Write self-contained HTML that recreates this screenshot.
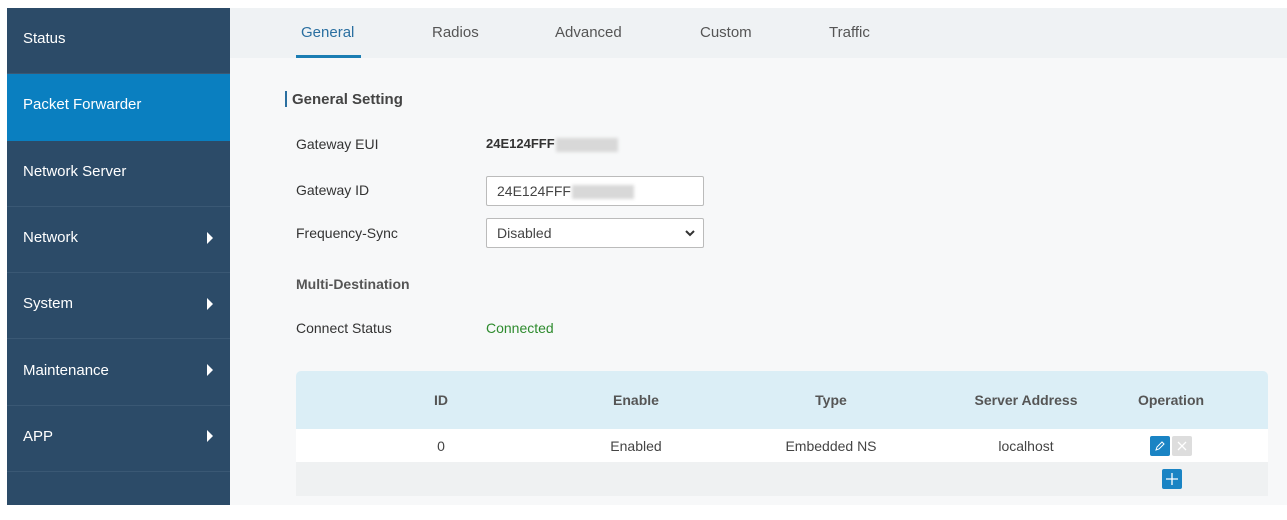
<!DOCTYPE html>
<html><head><style>
*{margin:0;padding:0;box-sizing:border-box}
body{width:1287px;height:520px;background:#fff;font-family:"Liberation Sans",Arial,sans-serif;font-size:14px;color:#333;position:relative;overflow:hidden}
.side{position:absolute;left:7px;top:8px;width:223px;height:497px;background:#2c4b68}
.it{height:66.3px;color:#fff;font-size:15px;padding-left:16px;padding-bottom:4px;display:flex;align-items:center;border-bottom:1px solid #3a5874;position:relative}
.it.act{background:#0a7fc0;border-bottom-color:#0a7fc0}
.arr{position:absolute;right:17px;top:50%;margin-top:-8px;width:0;height:0;border-left:6px solid #fff;border-top:6px solid transparent;border-bottom:6px solid transparent}
.main{position:absolute;left:230px;top:8px;width:1057px;height:497px;background:#f7f8f9}
.tabs{height:50px;background:#eff2f4;position:relative}
.tab{position:absolute;top:16px;font-size:15px;color:#555}
.tab.act{color:#2a6fa0}
.ul{position:absolute;left:296px;top:47px;width:65px;height:3px;background:#1b7db3}
.a{position:absolute;font-size:14px;color:#333}
.inp{position:absolute;left:486px;width:218px;height:30px;border:1px solid #bbb;background:#fff;border-radius:2px;padding-left:10px;line-height:28px;font-size:14px;color:#444}
.blur{display:inline-block;width:62px;height:14px;background:#d8d8d8;vertical-align:middle;margin-left:1px;filter:blur(1.5px)}
.tbl{position:absolute;left:296px;top:371px;width:972px}
.th{height:58px;background:#dbeef6;border-radius:5px 5px 0 0;position:relative;color:#555;font-weight:bold;font-size:14px}
.tr{height:33px;background:#fff;position:relative;font-size:14px;color:#444}
.tr2{height:34px;background:#eff1f2;position:relative}
.c{position:absolute;top:0;bottom:0;width:180px;margin-left:-90px;display:flex;align-items:center;justify-content:center}
.btn{width:20px;height:20px;border-radius:2px;display:inline-flex;align-items:center;justify-content:center;margin:0 1px}
</style></head><body>
<div class="side">
<div class="it">Status</div>
<div class="it act">Packet Forwarder</div>
<div class="it">Network Server</div>
<div class="it">Network<span class="arr"></span></div>
<div class="it">System<span class="arr"></span></div>
<div class="it">Maintenance<span class="arr"></span></div>
<div class="it">APP<span class="arr"></span></div>
</div>
<div class="main"><div class="tabs"></div></div>
<div class="tab act" style="left:301px;top:24px">General</div>
<div class="tab" style="left:432px;top:24px">Radios</div>
<div class="tab" style="left:555px;top:24px">Advanced</div>
<div class="tab" style="left:700px;top:24px">Custom</div>
<div class="tab" style="left:829px;top:24px">Traffic</div>
<div class="ul" style="top:55px"></div>
<div style="position:absolute;left:285px;top:91px;width:2px;height:16px;background:#2a6fa0"></div>
<div class="a" style="left:292px;top:91px;font-weight:bold;font-size:15px;color:#444">General Setting</div>
<div class="a" style="left:296px;top:136px">Gateway EUI</div>
<div class="a" style="left:486px;top:136px;font-weight:bold;font-size:13px">24E124FFF<span class="blur"></span></div>
<div class="a" style="left:296px;top:182px">Gateway ID</div>
<div class="inp" style="top:176px">24E124FFF<span class="blur"></span></div>
<div class="a" style="left:296px;top:225px">Frequency-Sync</div>
<div class="inp" style="top:218px">Disabled<svg style="position:absolute;right:8px;top:10px" width="10" height="8" viewBox="0 0 10 8"><path d="M1 2l4 4 4-4" stroke="#333" stroke-width="2" fill="none"/></svg></div>
<div class="a" style="left:296px;top:276px;font-weight:bold;color:#555">Multi-Destination</div>
<div class="a" style="left:296px;top:320px">Connect Status</div>
<div class="a" style="left:486px;top:320px;color:#2e8b2e">Connected</div>
<div class="tbl">
<div class="th"><div class="c" style="left:145px">ID</div><div class="c" style="left:340px">Enable</div><div class="c" style="left:535px">Type</div><div class="c" style="left:730px">Server Address</div><div class="c" style="left:875px">Operation</div></div>
<div class="tr"><div class="c" style="left:145px">0</div><div class="c" style="left:340px">Enabled</div><div class="c" style="left:535px">Embedded NS</div><div class="c" style="left:730px">localhost</div><div class="c" style="left:875px"><span class="btn" style="background:#1a84c4"><svg width="12" height="12" viewBox="0 0 12 12"><path d="M2 10l1-3 5-5 2 2-5 5z" stroke="#fff" fill="none" stroke-width="1"/></svg></span><span class="btn" style="background:#ddd"><svg width="12" height="12" viewBox="0 0 12 12"><path d="M2 2l8 8M10 2l-8 8" stroke="#fff" stroke-width="1.3"/></svg></span></div></div>
<div class="tr2"><span class="btn" style="position:absolute;left:865px;top:7px;background:#1a84c4"><svg width="14" height="14" viewBox="0 0 14 14"><path d="M7 1v12M1 7h12" stroke="#fff" stroke-width="1.3"/></svg></span></div>
</div>
</body></html>
